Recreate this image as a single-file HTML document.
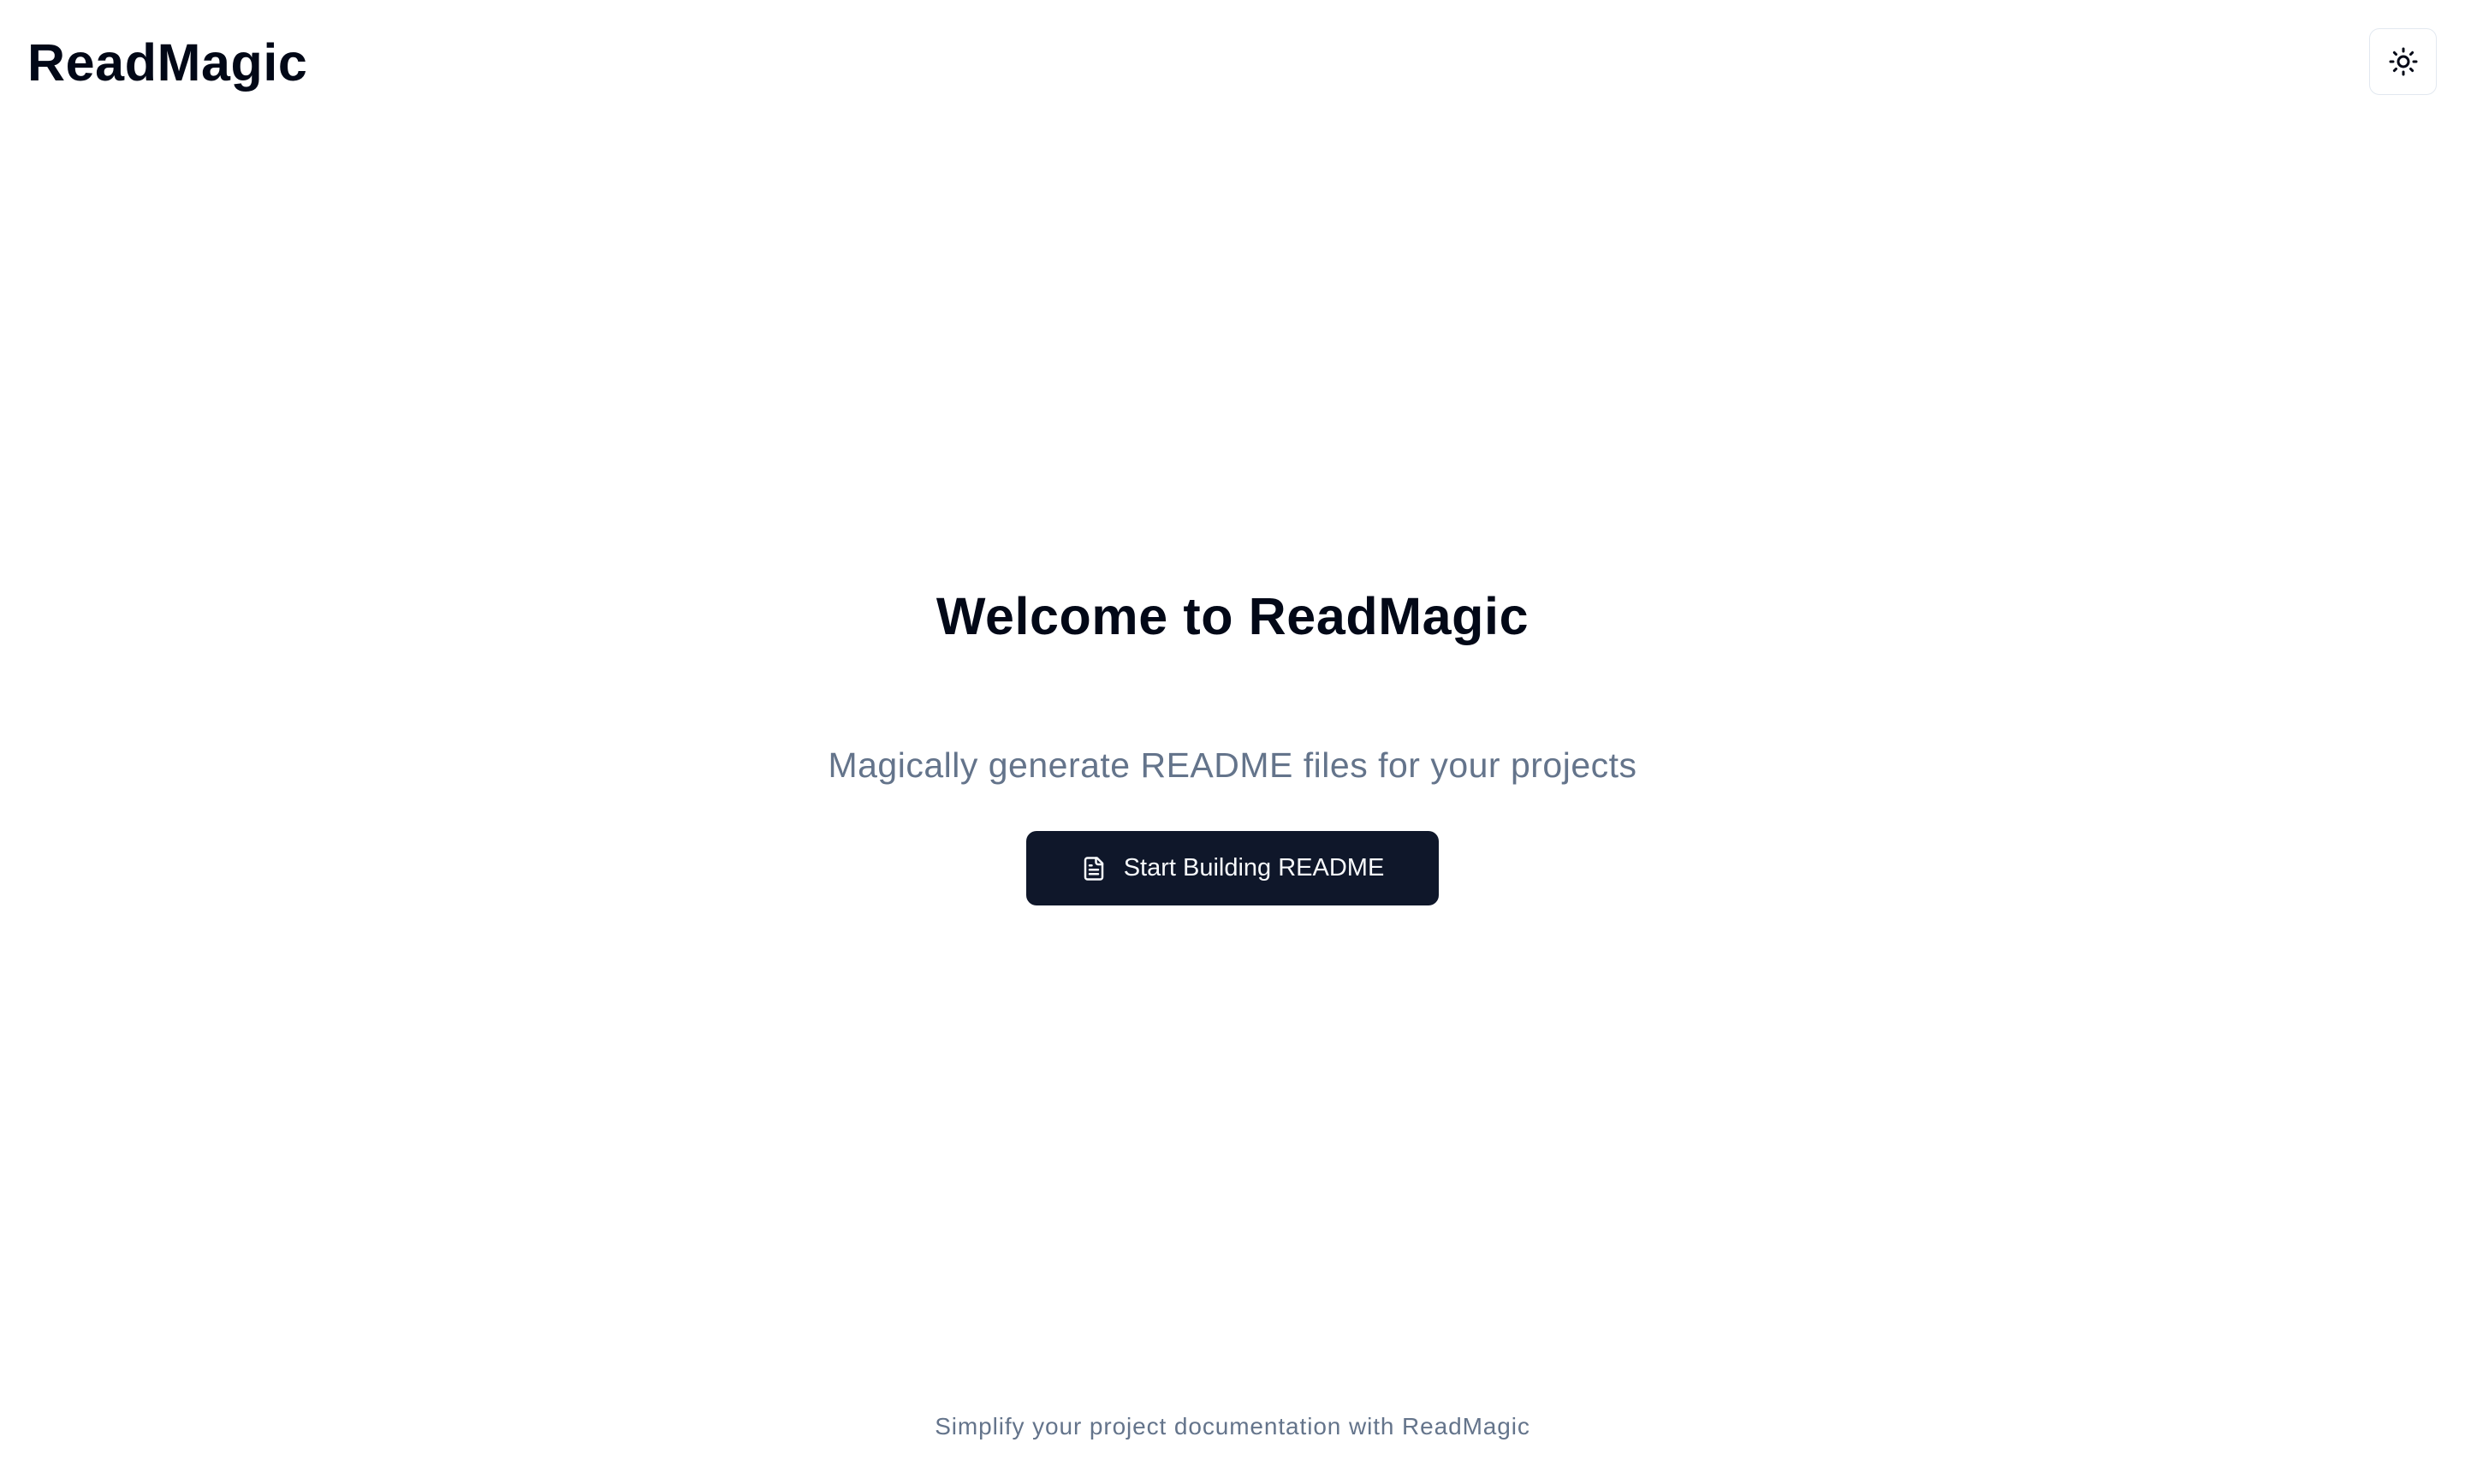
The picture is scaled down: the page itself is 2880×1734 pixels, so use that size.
<!DOCTYPE html>
<html><head><meta charset="utf-8"><style>
html,body{margin:0;padding:0;width:2880px;height:1734px;background:#fff;overflow:hidden;font-family:"Liberation Sans",sans-serif;}
.a{position:absolute;white-space:nowrap;line-height:1;}
#logo{left:32px;top:43px;font-size:61px;font-weight:700;color:#020817;letter-spacing:0.6px;}
#theme{position:absolute;left:2768px;top:33px;width:77px;height:76px;border:1.5px solid #e2e8f0;border-radius:12px;display:flex;align-items:center;justify-content:center;}
#h{left:0;width:2880px;text-align:center;top:690px;font-size:61px;font-weight:700;color:#020817;letter-spacing:0.6px;}
#sub{left:0;width:2880px;text-align:center;top:874px;font-size:41px;color:#64748b;letter-spacing:0.5px;}
#btn{position:absolute;left:1199px;top:971px;width:482px;height:87px;background:#0f172a;border-radius:12px;display:flex;align-items:center;justify-content:center;color:#f8fafc;font-size:29px;font-weight:500;gap:20px;letter-spacing:0;}
#ft{left:0;width:2880px;text-align:center;top:1653px;font-size:28px;color:#64748b;letter-spacing:0.9px;}
</style></head><body>
<div class="a" id="logo">ReadMagic</div>
<div id="theme"><svg width="36" height="36" viewBox="0 0 24 24" fill="none" stroke="#020817" stroke-width="2" stroke-linecap="round" stroke-linejoin="round"><circle cx="12" cy="12" r="4"/><path d="M12 2v2M12 20v2M4.93 4.93l1.41 1.41M17.66 17.66l1.41 1.41M2 12h2M20 12h2M6.34 17.66l-1.41 1.41M19.07 4.93l-1.41 1.41"/></svg></div>
<div class="a" id="h">Welcome to ReadMagic</div>
<div class="a" id="sub">Magically generate README files for your projects</div>
<div id="btn"><svg width="30" height="30" viewBox="0 0 24 24" fill="none" stroke="#f8fafc" stroke-width="2" stroke-linecap="round" stroke-linejoin="round"><path d="M15 2H6a2 2 0 0 0-2 2v16a2 2 0 0 0 2 2h12a2 2 0 0 0 2-2V7Z"/><path d="M14 2v4a2 2 0 0 0 2 2h4"/><path d="M10 9H8M16 13H8M16 17H8"/></svg><span>Start Building README</span></div>
<div class="a" id="ft">Simplify your project documentation with ReadMagic</div>
</body></html>
